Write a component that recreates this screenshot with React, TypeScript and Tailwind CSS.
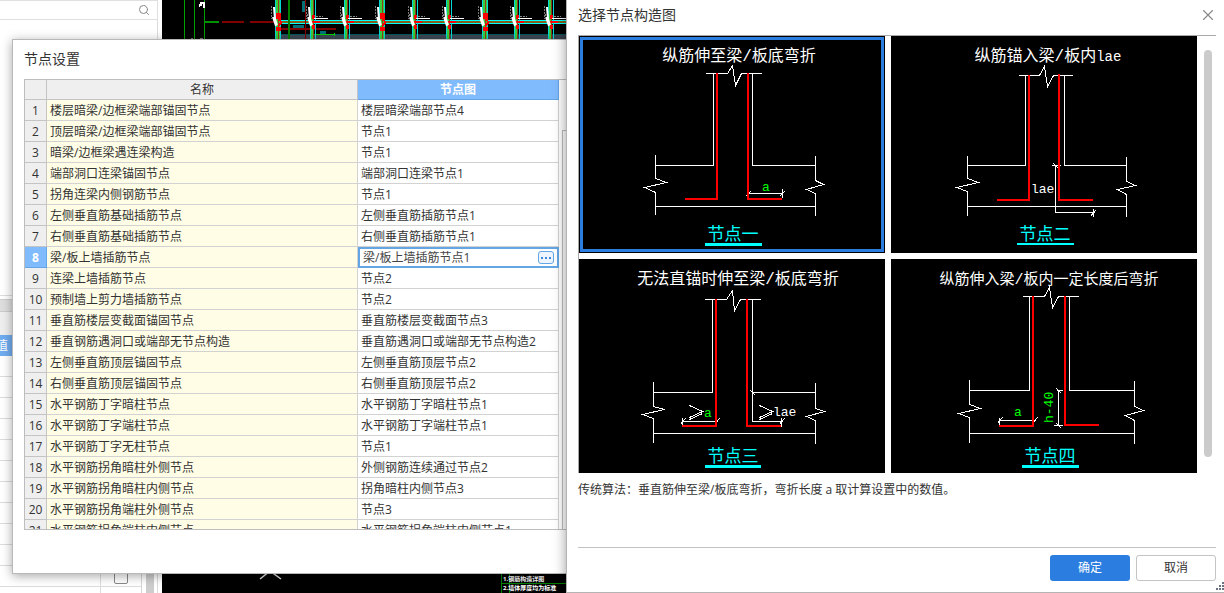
import { useState } from "react";
import type { ReactNode } from "react";
import { Search, X } from "lucide-react";

const rows: [string, string][] = [
  ["楼层暗梁/边框梁端部锚固节点", "楼层暗梁端部节点4"],
  ["顶层暗梁/边框梁端部锚固节点", "节点1"],
  ["暗梁/边框梁遇连梁构造", "节点1"],
  ["端部洞口连梁锚固节点", "端部洞口连梁节点1"],
  ["拐角连梁内侧钢筋节点", "节点1"],
  ["左侧垂直筋基础插筋节点", "左侧垂直筋插筋节点1"],
  ["右侧垂直筋基础插筋节点", "右侧垂直筋插筋节点1"],
  ["梁/板上墙插筋节点", "梁/板上墙插筋节点1"],
  ["连梁上墙插筋节点", "节点2"],
  ["预制墙上剪力墙插筋节点", "节点2"],
  ["垂直筋楼层变截面锚固节点", "垂直筋楼层变截面节点3"],
  ["垂直钢筋遇洞口或端部无节点构造", "垂直筋遇洞口或端部无节点构造2"],
  ["左侧垂直筋顶层锚固节点", "左侧垂直筋顶层节点2"],
  ["右侧垂直筋顶层锚固节点", "右侧垂直筋顶层节点2"],
  ["水平钢筋丁字暗柱节点", "水平钢筋丁字暗柱节点1"],
  ["水平钢筋丁字端柱节点", "水平钢筋丁字端柱节点1"],
  ["水平钢筋丁字无柱节点", "节点1"],
  ["水平钢筋拐角暗柱外侧节点", "外侧钢筋连续通过节点2"],
  ["水平钢筋拐角暗柱内侧节点", "拐角暗柱内侧节点3"],
  ["水平钢筋拐角端柱外侧节点", "节点3"],
  ["水平钢筋拐角端柱内侧节点", "水平钢筋拐角端柱内侧节点1"],
];

const columns = [
  { x: 116, big: true },
  { x: 151, big: false },
  { x: 185, big: false },
  { x: 220, big: true },
  { x: 253, big: false },
  { x: 287, big: false },
  { x: 323, big: true },
  { x: 355, big: false },
  { x: 389, big: false },
];

type Diagram = {
  id: string;
  title: ReactNode;
  titleX: number;
  titleSize: string;
  name: string;
  nameX: number;
  nameY: number;
  white: string;
  red: string;
  underline: string;
  underlineWidth: number;
  labels: ReactNode;
};

const mono = "font-['Liberation_Mono','Noto_Sans_CJK_SC',monospace]";

const diagrams: Diagram[] = [
  {
    id: "1",
    title: "纵筋伸至梁/板底弯折",
    titleX: 160,
    titleSize: "text-[16px]",
    name: "节点一",
    nameX: 154,
    nameY: 204,
    white:
      "M126 37H148L153 29L156 49L162 37H182 M134 37V129H76 M173 37V129H236 M76 118V142L87 146L65 151L76 156V178 M236 119V144L244 148L227 153L236 157V179 M76 170H236 M169 157H203 M203 152V161 M166 160L171 155 M200 160L205 155",
    red: "M138 37V163H106 M169 37V163H203",
    underline: "M126 208.5H183",
    underlineWidth: 3,
    labels: <text x={183} y={155} className="fill-[#00ff00] text-[13px]">a</text>,
  },
  {
    id: "2",
    title: <>纵筋锚入梁/板内<tspan className="text-[14px]">lae</tspan></>,
    titleX: 157,
    titleSize: "text-[16px]",
    name: "节点二",
    nameX: 154,
    nameY: 204,
    white:
      "M127 39H148L153 30L156 50L162 39H181 M134 39V129H76 M173 39V129H235 M76 119V142L87 146L65 151L76 155V179 M235 120V145L244 149L226 153L235 158V180 M76 170H235 M160 129H169 M162 127L167 132 M164 129V176H203 M202 172V180 M204 174L199 180",
    red: "M138 39V164H106 M168 38V164H202",
    underline: "M126 208H183",
    underlineWidth: 2,
    labels: <text x={140} y={157} className="fill-white text-[13px]">lae</text>,
  },
  {
    id: "3",
    title: "无法直锚时伸至梁/板底弯折",
    titleX: 159,
    titleSize: "text-[16px]",
    name: "节点三",
    nameX: 154,
    nameY: 203,
    white:
      "M125 40H147L153 31L155 51L161 40H181 M133 40V133H74 M173 40V162H202 M173 133H236 M74 122V147L85 150L63 155L74 159V183 M236 123V149L245 152L227 157L236 161V184 M74 174H236 M103 162H137 M103 158V167 M101 165L106 159 M135 165L140 159 M171 131L176 136 M202 158V167 M200 165L205 159 M110 146L123 152L110 158 M110 160L123 154 M180 146L193 152L180 158 M180 160L193 154",
    red: "M137 40V167H103 M168 40V167H202",
    underline: "M126 207.5H182",
    underlineWidth: 3,
    labels: (
      <>
        <text x={125} y={158} className="fill-[#00ff00] text-[13px]">a</text>
        <text x={194} y={157} className="fill-white text-[13px]">lae</text>
      </>
    ),
  },
  {
    id: "4",
    title: "纵筋伸入梁/板内一定长度后弯折",
    titleX: 158,
    titleSize: "text-[15px]",
    name: "节点四",
    nameX: 159,
    nameY: 203,
    white:
      "M131 37H153L158 28L161 48L167 37H187 M138 37V131H78 M178 37V131H243 M78 120V145L89 149L67 154L78 158V183 M243 121V147L252 151L234 156L243 161V184 M78 174H243 M108 161H143 M108 158V165 M106 164L111 158 M141 164L146 158 M167 131V166 M165 131H171 M162 166H171 M165 129L170 134 M165 164L170 169",
    red: "M142 37V167H108 M174 37V166H208",
    underline: "M131 207.5H188",
    underlineWidth: 3,
    labels: (
      <>
        <text x={123} y={157} className="fill-[#00ff00] text-[13px]">a</text>
        <text transform="translate(162 164) rotate(-90)" className="fill-[#00ff00] text-[13px]">h-40</text>
      </>
    ),
  },
];

function NodeDiagram({ d }: { d: Diagram }) {
  return (
    <svg viewBox="0 0 306 217" className={`block w-full bg-black ${mono}`} fill="none">
      <text x={d.titleX} y={25} textAnchor="middle" className={`fill-white ${d.titleSize}`}>{d.title}</text>
      <path d={d.white} transform="translate(.5 .5)" stroke="#fff" shapeRendering="crispEdges" />
      <path d={d.red} stroke="#f00" strokeWidth={2} shapeRendering="crispEdges" />
      {d.labels}
      <text x={d.nameX} y={d.nameY} textAnchor="middle" className="fill-[#00ffff] text-[17px]">{d.name}</text>
      <path d={d.underline} stroke="#0ff" strokeWidth={d.underlineWidth} shapeRendering="crispEdges" />
    </svg>
  );
}

// Strip of the floor plan above the settings window
function PlanStrip() {
  return (
    <svg width="404" height="39" viewBox="0 0 404 39" className="block" shapeRendering="crispEdges" fill="none">
      <path d="M22.5 0V39M32.5 0V39M42.5 0V39" stroke="#00a000" />
      <path d="M42 22H57" stroke="#009000" strokeWidth="2" />
      <path d="M60 22H82M88 22H115M116 29H174" stroke="#800000" strokeWidth="2" />
      <path d="M38 3H42V8M37 6L40 4" stroke="#fff" strokeWidth="2" />
      <path d="M29 38.5H31M38 38.5H41" stroke="#777" />
      <rect x="115" y="34" width="289" height="5" fill="#3c4855" />
      <path d="M116 34.5H404" stroke="#00565c" />
      <path d="M116 20.5H404M116 23.5H404" stroke="#00ffff" />
      <path d="M116 22H404" stroke="#806018" strokeWidth="2" />
      <path d="M126.5 0V39" stroke="#008000" strokeWidth="2" />
      <path d="M143.5 0V39" stroke="#800000" />
      <path d="M141 1V12M131 26H142M158 32H164" stroke="#006f78" strokeWidth="3" />
      <path d="M151 34.5H173M172 33V36" stroke="#00d000" />
      {columns.map((c) => (
        <g key={c.x} transform={`translate(${c.x} 0)`}>
          <path d={c.big ? "M0 0V39" : "M-.5 0V39"} stroke="#38cf3d" strokeWidth={c.big ? 5 : 3} />
          <path d="M-2.5 0V39M2.5 0V39" stroke="#00d8d8" />
          <path d="M.5 0V39" stroke="#904018" />
          <path d={c.big ? "M0 13V19M0 27V31" : "M0 15V19M0 25V29"} stroke="#f00" strokeWidth={c.big ? 5 : 3} />
          <path d={c.big ? "M0 19Q6 22 0 26" : "M-4 22H7"} stroke="#f00" strokeWidth="2" />
          <path d="M-4 7L-3 19L-1 25M-5 17L-2 26" stroke="#fff" strokeWidth="2" shapeRendering="auto" />
          <path d="M-6.5 6V19" stroke="#777" strokeDasharray="2 1" />
          {!c.big && <path d="M1 18.5H15" stroke="#fff" />}
          {!c.big && <path d="M3 16.5H10M-6 14V18" stroke="#888" strokeDasharray="2 1" />}
        </g>
      ))}
    </svg>
  );
}

function Workspace() {
  return (
    <div className="flex h-full" aria-hidden="true">
      <div className="flex w-[162px] shrink-0 flex-col bg-white">
        <div className="mr-1 flex h-5 items-center justify-end border-y border-r border-[#e0e0e0] pr-[7px]">
          <Search className="size-3 text-[#888]" />
        </div>
        <div className="mr-1 h-[276px] border-r border-b border-[#dcdcdc]" />
        <div className="mr-1 h-1 border-b border-[#ccc]" />
        <div className="h-3 border-b border-[#ccc] bg-[#dedede]" />
        <div className="h-[23px] bg-[#efefef]" />
        <div className="flex min-h-0 flex-1 overflow-hidden border-r border-white">
          <div className="w-[142px] shrink-0 border-r border-[#d6d6d6]">
            <div className="h-[21px] bg-[#70acf0] text-[12px] leading-[21px] text-white">
              <span className="-ml-1">值</span>
            </div>
            {Array.from({ length: 12 }, (_, i) => (
              <div key={i} className="flex h-[21px] border-b border-[#dcdcdc]">
                <span className="w-[101px] border-r border-[#dcdcdc]" />
                {i === 10 && <span className="mt-1 ml-[13px] size-[14px] rounded-xs border border-[#888]" />}
              </div>
            ))}
          </div>
          <div className="ml-1 w-2 bg-[#cdcdcd]" />
          <div className="ml-[3px] border-r border-[#dcdcdc]" />
        </div>
      </div>
      <div className="flex min-w-0 flex-1 flex-col justify-between bg-black">
        <PlanStrip />
        <svg width="404" height="19" viewBox="0 0 404 19" className="block" fill="none">
          <path d="M98 5L108 -3L119 5" stroke="#ddd" strokeWidth="1.5" />
          <path d="M339.5 0V19M347.5 0V19M339 9.5H404" stroke="#008000" />
          <text x="341" y="7" className="fill-white text-[6px] font-bold">1.钢筋构造详图</text>
          <text x="341" y="16" className="fill-white text-[6px] font-bold">2.墙体厚度均为标准</text>
        </svg>
      </div>
    </div>
  );
}

function SettingsWindow() {
  const [active, setActive] = useState(7);
  const [values, setValues] = useState(rows.map((r) => r[1]));

  return (
    <section className="absolute top-[39px] bottom-[19px] left-3 flex w-[600px] flex-col border border-[#b8b8b8] bg-white pl-[11px] shadow-[0_2px_10px_rgba(0,0,0,0.35)]">
      <h1 className="h-[39px] shrink-0 text-[14px] leading-[37px]">节点设置</h1>
      <div className="flex min-h-0 flex-1 overflow-hidden border-y border-l border-[#bdbdbd]">
        <table className="h-fit w-[534px] table-fixed border-separate border-spacing-0 text-[12px] leading-[18px]">
          <colgroup>
            <col className="w-[22px]" />
            <col className="w-[311px]" />
            <col className="w-[201px]" />
          </colgroup>
          <thead>
            <tr className="h-5 leading-[19px]">
              <th className="border-r border-b border-[#c4c4c4] bg-[#efefef] p-0" aria-label="序号" />
              <th className="border-r border-b border-[#c4c4c4] bg-[#efefef] p-0 font-normal">名称</th>
              <th className="border-r border-b border-[#64a5e8] bg-[#80bbfd] p-0 font-bold text-white">节点图</th>
            </tr>
          </thead>
          <tbody>
            {rows.map(([name], i) => (
              <tr key={name} className="h-[21px]" onClick={() => setActive(i)}>
                <th className={`border-r border-b px-0 pt-[2px] pb-0 ${i === active ? "border-[#64a5e8] bg-[#80bbfd] font-bold text-white" : "border-[#c4c4c4] bg-[#efefef] font-normal"}`}>
                  {i + 1}
                </th>
                <td className="border-r border-b border-[#d2d2d2] bg-[#fffde6] pt-[2px] pr-0 pb-0 pl-[3px] whitespace-nowrap">{name}</td>
                {i === active ? (
                  <td className="p-0">
                    <div className="flex h-[21px] items-center border-2 border-[#64a5e4] pr-[3px] pl-[3px]">
                      <input
                        aria-label={name}
                        value={values[i]}
                        onChange={(e) => setValues(values.map((v, n) => (n === i ? e.target.value : v)))}
                        className="h-[17px] min-w-0 flex-1 leading-[17px] text-[#444] outline-none"
                      />
                      <button aria-label="选择节点图" className="flex h-[13px] w-4 items-center justify-center gap-[2px] rounded-[3px] border border-[#64a5e4] bg-[#eef5ff]">
                        <i className="size-[2px] bg-[#3e88d8]" />
                        <i className="size-[2px] bg-[#3e88d8]" />
                        <i className="size-[2px] bg-[#3e88d8]" />
                      </button>
                    </div>
                  </td>
                ) : (
                  <td className="border-r border-b border-[#d2d2d2] pt-[2px] pr-0 pb-0 pl-[3px] whitespace-nowrap">{values[i]}</td>
                )}
              </tr>
            ))}
          </tbody>
        </table>
        <div className="mt-[50px] ml-[3px] w-3 border-t border-l border-[#bdbdbd]" />
      </div>
      <div className="h-[43px] shrink-0" />
    </section>
  );
}

function PickerWindow() {
  const [picked, setPicked] = useState("1");

  return (
    <section className="absolute inset-y-0 right-0 left-[566px] flex flex-col border-b border-l border-[#b4b4b4] bg-white pr-2 pl-[11px] shadow-[0_0_12px_rgba(0,0,0,0.4)]">
      <header className="flex h-[35px] shrink-0 items-center justify-between pb-[6px]">
        <h2 className="text-[14px]">选择节点构造图</h2>
        <button aria-label="关闭" className="-mr-px">
          <X className="size-[18px] text-[#888]" strokeWidth={1.5} />
        </button>
      </header>
      <div className="flex min-h-0 flex-1 overflow-hidden border-t border-[#a8a8a8]">
        <div className="grid h-fit min-w-0 flex-1 grid-cols-2 gap-[6px] border-l border-[#a8a8a8]">
          {diagrams.map((d) => (
            <button key={d.id} onClick={() => setPicked(d.id)} aria-pressed={picked === d.id} className="relative">
              <NodeDiagram d={d} />
              {picked === d.id && <span className="absolute inset-px border-[3px] border-[#2b7de0]" />}
            </button>
          ))}
        </div>
        <div className="w-[19px] shrink-0 pt-[14px] pl-[7px]">
          <div className="h-[407px] w-2 rounded-full bg-[#cbcbcb]" />
        </div>
      </div>
      <p className="h-[74px] shrink-0 pt-[7px] text-[12px] leading-5">传统算法：垂直筋伸至梁/板底弯折，弯折长度 a 取计算设置中的数值。</p>
      <footer className="flex h-[45px] shrink-0 justify-end gap-[6px] border-t border-[#c2c2c2] pt-[7px] text-[12px]">
        <button className="h-[26px] w-20 rounded-[3px] bg-[#2b7de0] text-white">确定</button>
        <button className="h-[26px] w-20 rounded-[3px] border border-[#c4c4c4] bg-white">取消</button>
      </footer>
      <svg width="8" height="8" viewBox="0 0 8 8" className="absolute right-0 bottom-[2px]" fill="#6b7280" aria-hidden="true">
        <path d="M6 0h2v2H6zM3 3h2v2H3zM6 3h2v2H6zM0 6h2v2H0zM3 6h2v2H3zM6 6h2v2H6z" />
      </svg>
    </section>
  );
}

export default function App() {
  return (
    <main className="relative h-screen overflow-hidden bg-white font-['Open_Sans','Noto_Sans_CJK_SC',sans-serif] text-[#333]">
      <Workspace />
      <SettingsWindow />
      <PickerWindow />
    </main>
  );
}
